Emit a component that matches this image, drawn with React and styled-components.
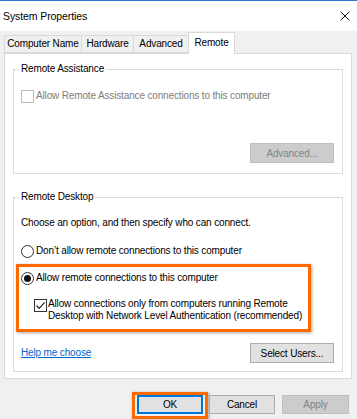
import React from "react";
import styled, { createGlobalStyle } from "styled-components";

const Global = createGlobalStyle`
  html, body { margin: 0; padding: 0; overflow: hidden; background: #f0f0f0; }
  * { box-sizing: border-box; }
  body { font-family: "Liberation Sans", Arial, sans-serif; font-size: 10px; letter-spacing: -0.15px; color: #000; }
`;

const Window = styled.div`
  width: 357px;
  height: 419px;
  background: #f0f0f0;
  overflow: hidden;
  display: flex;
  flex-direction: column;
`;

const TitleBar = styled.div`
  height: 31px;
  flex: none;
  background: #fff;
  border-top: 1px solid #2b79d0;
  display: flex;
  align-items: center;
  justify-content: space-between;
  padding: 0 7px 0 3px;
`;

const Title = styled.span`
  font-size: 10.5px;
  letter-spacing: -0.1px;
  line-height: 14px;
`;

const Body = styled.div`
  padding: 1px 5px 0 4px;
  display: flex;
  flex-direction: column;
`;

const TabStrip = styled.div`
  display: flex;
  align-items: flex-end;
  height: 21px;
  position: relative;
  z-index: 1;
`;

const Tab = styled.div`
  width: ${(p) => p.$w}px;
  flex: none;
  height: ${(p) => (p.$active ? "22px" : "18px")};
  margin-bottom: ${(p) => (p.$active ? "-1px" : "0")};
  margin-left: -1px;
  &:first-child { margin-left: 0; }
  border: 1px solid #d9d9d9;
  border-bottom: ${(p) => (p.$active ? "none" : "1px solid #d9d9d9")};
  background: ${(p) => (p.$active ? "#fff" : "#f0f0f0")};
  display: flex;
  align-items: center;
  justify-content: center;
  white-space: nowrap;
  line-height: 12px;
  ${(p) => (p.$active ? "padding-bottom: 1px;" : "")}
`;

const Panel = styled.div`
  height: 326px;
  background: #fff;
  border: 1px solid #d9d9d9;
  padding: 0 8px;
  display: flex;
  flex-direction: column;
`;

const Group = styled.fieldset`
  margin: ${(p) => p.$top}px 0 0 0;
  padding: 0;
  border: 1px solid #dcdcdc;
  min-width: 0;
`;

const Legend = styled.legend`
  margin-left: 5px;
  padding: 0 2px;
  line-height: 14px;
`;

const GroupContent = styled.div`
  padding: ${(p) => p.$pt}px 8px ${(p) => p.$pb}px 7px;
  display: flex;
  flex-direction: column;
`;

const Row = styled.div`
  display: flex;
  align-items: ${(p) => (p.$top ? "flex-start" : "center")};
  gap: ${(p) => p.$gap ?? 2}px;
  margin-top: ${(p) => p.$mt ?? 0}px;
  margin-left: ${(p) => p.$ml ?? 0}px;
  line-height: ${(p) => p.$lh ?? 14}px;
  color: ${(p) => (p.$disabled ? "#7d7d7d" : "#000")};
`;

const Text = styled.span`
  line-height: inherit;
`;

const Box = styled.span`
  width: 13px;
  height: 13px;
  flex: none;
  background: #fff;
  border: 1px solid ${(p) => (p.$disabled ? "#bcbcbc" : "#333")};
  display: flex;
  align-items: center;
  justify-content: center;
  margin-top: ${(p) => p.$mt ?? 0}px;
`;

const Radio = styled.span`
  width: 13px;
  height: 13px;
  flex: none;
  border-radius: 50%;
  background: #fff;
  border: 1px solid #333;
  display: flex;
  align-items: center;
  justify-content: center;
  &::after {
    content: "";
    width: 7px;
    height: 7px;
    border-radius: 50%;
    background: ${(p) => (p.$checked ? "#111" : "transparent")};
  }
`;

const Highlight = styled.div`
  border: 3px solid #ff6a00;
  box-shadow: 1px 1px 3px rgba(0, 0, 0, 0.35);
  width: ${(p) => p.$w}px;
  margin: ${(p) => p.$m};
  padding: ${(p) => p.$p};
  display: flex;
  flex-direction: column;
  flex: none;
`;

const BottomRow = styled.div`
  display: flex;
  align-items: center;
  justify-content: space-between;
  margin-top: ${(p) => p.$mt}px;
`;

const Link = styled.a`
  color: #0066cc;
  text-decoration: underline;
  line-height: 14px;
  cursor: pointer;
`;

const Button = styled.button`
  width: ${(p) => p.$w}px;
  height: ${(p) => p.$h ?? 19}px;
  flex: none;
  margin: ${(p) => p.$m ?? "0"};
  font-family: inherit;
  font-size: 10px;
  letter-spacing: -0.15px;
  padding: 0;
  background: ${(p) => (p.disabled ? "#cccccc" : "#e1e1e1")};
  border: 1px solid ${(p) => (p.disabled ? "#bfbfbf" : p.$default ? "#0078d7" : "#adadad")};
  box-shadow: ${(p) => (p.$default ? "inset 0 0 0 1px #0078d7" : "none")};
  color: ${(p) => (p.disabled ? "#838383" : "#000")};
  align-self: ${(p) => (p.$end ? "flex-end" : "auto")};
`;

const Footer = styled.div`
  display: flex;
  justify-content: flex-end;
  align-items: flex-start;
  margin-top: 13px;
  padding-right: 3px;
`;

const CloseIcon = () => (
  <svg width="10" height="10" viewBox="0 0 10 10">
    <path d="M0.5 0.5 L9.5 9.5 M9.5 0.5 L0.5 9.5" stroke="#111" strokeWidth="1" fill="none" />
  </svg>
);

const Check = () => (
  <svg width="11" height="11" viewBox="0 0 11 11">
    <path d="M1.5 5.5 L4.2 8.3 L9.6 2.4" stroke="#222" strokeWidth="1.2" fill="none" />
  </svg>
);

export default function App() {
  return (
    <>
      <Global />
      <Window>
        <TitleBar>
          <Title>System Properties</Title>
          <CloseIcon />
        </TitleBar>
        <Body>
          <TabStrip>
            <Tab $w={78}>Computer Name</Tab>
            <Tab $w={53}>Hardware</Tab>
            <Tab $w={56}>Advanced</Tab>
            <Tab $w={47} $active>Remote</Tab>
          </TabStrip>
          <Panel>
            <Group $top={8}>
              <Legend>Remote Assistance</Legend>
              <GroupContent $pt={13} $pb={10}>
                <Row $disabled>
                  <Box $disabled />
                  <Text>Allow Remote Assistance connections to this computer</Text>
                </Row>
                <Button disabled $w={84} $h={20} $end $m="40px 0 0 0">
                  Advanced...
                </Button>
              </GroupContent>
            </Group>
            <Group $top={16}>
              <Legend>Remote Desktop</Legend>
              <GroupContent $pt={12} $pb={8}>
                <Row>
                  <Text>Choose an option, and then specify who can connect.</Text>
                </Row>
                <Row $mt={14}>
                  <Radio />
                  <Text>Don’t allow remote connections to this computer</Text>
                </Row>
                <Highlight $w={295} $m="6px 0 0 -5px" $p="4px 0 7px 2px">
                  <Row>
                    <Radio $checked />
                    <Text>Allow remote connections to this computer</Text>
                  </Row>
                  <Row $top $mt={13} $ml={13} $lh={12} $gap={1}>
                    <Box $mt={1}>
                      <Check />
                    </Box>
                    <Text>
                      Allow connections only from computers running Remote
                      <br />
                      Desktop with Network Level Authentication (recommended)
                    </Text>
                  </Row>
                </Highlight>
                <BottomRow $mt={11}>
                  <Link>Help me choose</Link>
                  <Button $w={84} $h={20}>Select Users...</Button>
                </BottomRow>
              </GroupContent>
            </Group>
          </Panel>
          <Footer>
            <Highlight $w={76} $m="0" $p="0 2px 2px 2px">
              <Button $default $w={66}>OK</Button>
            </Highlight>
            <Button $w={66} $m="3px 0 0 1px">Cancel</Button>
            <Button disabled $w={67} $m="3px 0 0 7px">Apply</Button>
          </Footer>
        </Body>
      </Window>
    </>
  );
}
